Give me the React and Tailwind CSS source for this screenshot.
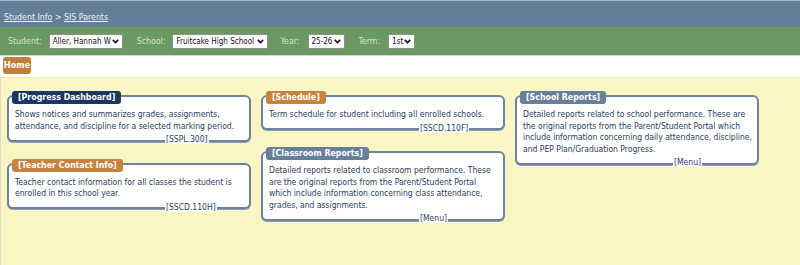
import React from "react";

const font = "font-['DejaVu_Sans_Condensed','Liberation_Sans',sans-serif]";

const tabColors = {
  navy: "bg-[#1b365f]",
  orange: "bg-[#c8823f]",
  slate: "bg-[#687f9b]",
};

const columns = [
  [
    {
      title: "[Progress Dashboard]",
      color: "navy",
      code: "[SSPL.300]",
      lines: [
        "Shows notices and summarizes grades, assignments,",
        "attendance, and discipline for a selected marking period.",
      ],
    },
    {
      title: "[Teacher Contact Info]",
      color: "orange",
      code: "[SSCD.110H]",
      lines: [
        "Teacher contact information for all classes the student is",
        "enrolled in this school year.",
      ],
    },
  ],
  [
    {
      title: "[Schedule]",
      color: "orange",
      code: "[SSCD.110F]",
      lines: ["Term schedule for student including all enrolled schools."],
    },
    {
      title: "[Classroom Reports]",
      color: "slate",
      code: "[Menu]",
      lines: [
        "Detailed reports related to classroom performance. These",
        "are the original reports from the Parent/Student Portal",
        "which include information concerning class attendance,",
        "grades, and assignments.",
      ],
    },
  ],
  [
    {
      title: "[School Reports]",
      color: "slate",
      code: "[Menu]",
      lines: [
        "Detailed reports related to school performance. These are",
        "the original reports from the Parent/Student Portal which",
        "include information concerning daily attendance, discipline,",
        "and PEP Plan/Graduation Progress.",
      ],
    },
  ],
];

const Chevron = () => (
  <svg width="7" height="5" viewBox="0 0 7 5" className="shrink-0">
    <polyline points="0.8,0.9 3.5,3.6 6.2,0.9" fill="none" stroke="#111" strokeWidth="1.6" />
  </svg>
);

const FakeSelect = ({ value, width }) => (
  <div
    className={`flex items-center justify-between h-[15px] bg-white border border-[#8f8f8f] pl-[3px] pr-[3px] text-[#111] text-[8px] leading-[13px] ${width}`}
  >
    <span className="whitespace-nowrap">{value}</span>
    <Chevron />
  </div>
);

const Card = ({ title, color, code, lines }) => (
  <div className="flex flex-col items-start">
    <div
      className={`relative z-10 ml-[5px] h-[13px] rounded-[3px] px-[6px] text-white font-bold text-[8.75px] leading-[13px] whitespace-nowrap ${tabColors[color]}`}
    >
      {title}
    </div>
    <div className="-mt-[9px] w-[244px] bg-white border-2 border-[#6e839f] rounded-[6px] shadow-[0_1px_0_#8d9db4] pt-[12px] pl-[6px] pr-[2px]">
      <p className="text-[#2b3e5d] text-[8.5px] leading-[11.6px]">
        {lines.map((l) => (
          <span key={l} className="block whitespace-nowrap">
            {l}
          </span>
        ))}
      </p>
      <div className="pl-[150px] mt-[2px] -mb-[6px] leading-[11.5px] text-[8.5px]">
        <span className="relative bg-white px-[1px] text-[#2b3e5d]">{code}</span>
      </div>
    </div>
  </div>
);

export default function App() {
  return (
    <div className={`flex flex-col min-h-screen ${font}`}>
      <div className="h-[27px] bg-[#647e98] border-t border-[#a7b6c6] pl-[4px] pt-[10px] text-[8.75px] leading-[12px] text-[#edf1f5]">
        <span className="underline">Student Info</span>
        {" > "}
        <span className="underline">SIS Parents</span>
      </div>
      <div className="h-[29px] bg-[#6a9962] border-b border-[#d6d6d6] flex items-center pl-[8px] text-[#d3e6c4] text-[8.75px] leading-[12px]">
        <span>Student:</span>
        <div className="ml-[7px]">
          <FakeSelect value="Aller, Hannah W" width="w-[74px]" />
        </div>
        <span className="ml-[14px]">School:</span>
        <div className="ml-[7px]">
          <FakeSelect value="Fruitcake High School" width="w-[96px]" />
        </div>
        <span className="ml-[12px]">Year:</span>
        <div className="ml-[8px]">
          <FakeSelect value="25-26" width="w-[37px]" />
        </div>
        <span className="ml-[14px]">Term:</span>
        <div className="ml-[8px]">
          <FakeSelect value="1st" width="w-[27px]" />
        </div>
      </div>
      <div className="h-[21px] bg-white pl-[3px] pt-[1px] flex items-start">
        <div className="h-[17px] w-[28px] rounded-[3px] bg-[#c47e3c] text-white font-bold text-[9px] leading-[17px] text-center">
          Home
        </div>
      </div>
      <div className="flex-1 bg-[#faf6c4] border-t border-[#efe9b4] border-l border-l-[#dcdcc8] pt-[13px] pl-[6px] flex gap-[10px] items-start">
        {columns.map((col, i) => (
          <div key={i} className="flex flex-col gap-[17px]">
            {col.map((card) => (
              <Card key={card.title} {...card} />
            ))}
          </div>
        ))}
      </div>
    </div>
  );
}
